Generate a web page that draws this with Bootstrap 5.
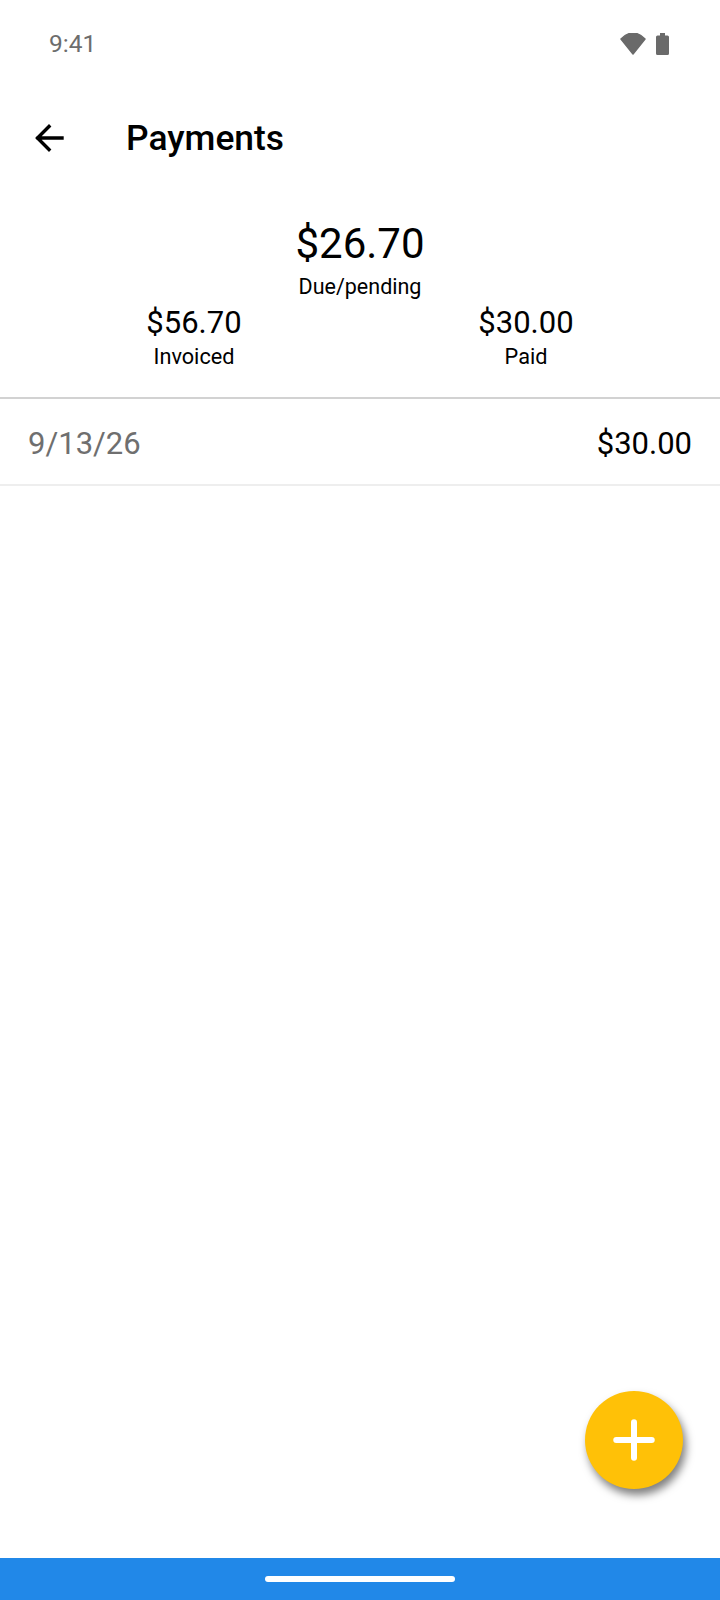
<!doctype html>
<html lang="en">
<head>
<meta charset="utf-8">
<title>Payments</title>
<link href="https://cdn.jsdelivr.net/npm/bootstrap@5.3.0/dist/css/bootstrap.min.css" rel="stylesheet">
<style>
html,body{height:100%}
body{font-family:Roboto,"Liberation Sans",sans-serif;color:#000;background:#fff}
.screen{height:1600px;width:720px;overflow:hidden}
.status-row{height:88px;padding:0 51px 0 49px}
.status-icons{gap:10px}
.clock{font-size:24.5px;color:#6d6d6d;line-height:1}
.app-row{height:100px;padding-left:35px}
.title-text{font-size:35.4px;font-weight:500;margin-left:62px;line-height:1;padding-top:2px}
.summary-box{height:209px;padding-top:27px}
.amt-main{font-size:42px;line-height:58px}
.amt-sub{font-size:31px;line-height:44px}
.cap-main{font-size:21.5px;line-height:27px}
.cap-text{font-size:21.7px;line-height:24px}
.sub-row{margin-top:1px}
.sum-col{width:332px}
.pay-row{height:89px;padding:6px 28px 0 28px;border-top:2px solid #d2d2d2;border-bottom:2px solid #eee;font-size:31px}
.date-text{color:#6f6f6f}
.list-area{min-height:0}
.fab-round{position:absolute;right:37px;bottom:111px;width:98px;height:98px;border-radius:50%;background:#ffc107;border:0;padding:0;box-shadow:3px 6px 9px rgba(0,0,0,.5)}
.nav-strip{height:42px;background:#2188e8}
.home-pill{width:190px;height:6px;border-radius:3px;background:#fff}
</style>
</head>
<body>
<div class="screen position-relative d-flex flex-column">
  <div class="status-row d-flex align-items-center justify-content-between">
    <span class="clock">9:41</span>
    <span class="status-icons d-flex align-items-center">
      <svg width="26" height="22" viewBox="0 0 26 22"><path d="M1 6 Q13 -6 25 6 L13 21 Z" fill="#6a6a6a" stroke="#6a6a6a" stroke-width="1.5" stroke-linejoin="round"/></svg>
      <svg width="13" height="22" viewBox="0 0 13 22"><path d="M4 0h5v2.5h2.5a1.5 1.5 0 0 1 1.5 1.5v16.5a1.5 1.5 0 0 1-1.5 1.5h-10a1.5 1.5 0 0 1-1.5-1.5V4a1.5 1.5 0 0 1 1.5-1.5H4z" fill="#6a6a6a"/></svg>
    </span>
  </div>
  <div class="app-row d-flex align-items-center">
    <svg width="29" height="28" viewBox="0 0 29 28" fill="none" stroke="#000" stroke-width="3.4" stroke-linecap="square"><path d="M27 14H3M14 2.5 2.5 14 14 25.5"/></svg>
    <span class="title-text">Payments</span>
  </div>
  <div class="summary-box text-center">
    <div class="amt-main">$26.70</div>
    <div class="cap-main">Due/pending</div>
    <div class="sub-row d-flex justify-content-center">
      <div class="sum-col"><div class="amt-sub">$56.70</div><div class="cap-text">Invoiced</div></div>
      <div class="sum-col"><div class="amt-sub">$30.00</div><div class="cap-text">Paid</div></div>
    </div>
  </div>
  <div class="pay-row d-flex align-items-center justify-content-between">
    <span class="date-text">9/13/26</span><span>$30.00</span>
  </div>
  <div class="list-area flex-grow-1"></div>
  <button class="fab-round d-flex align-items-center justify-content-center" type="button" aria-label="Add">
    <svg width="44" height="44" viewBox="0 0 44 44" stroke="#fff" stroke-width="6" stroke-linecap="round"><path d="M22 4.25v35.5M4.25 22h35.5"/></svg>
  </button>
  <div class="nav-strip d-flex align-items-center justify-content-center"><div class="home-pill"></div></div>
</div>
<script src="https://cdn.jsdelivr.net/npm/bootstrap@5.3.0/dist/js/bootstrap.bundle.min.js"></script>
</body>
</html>
